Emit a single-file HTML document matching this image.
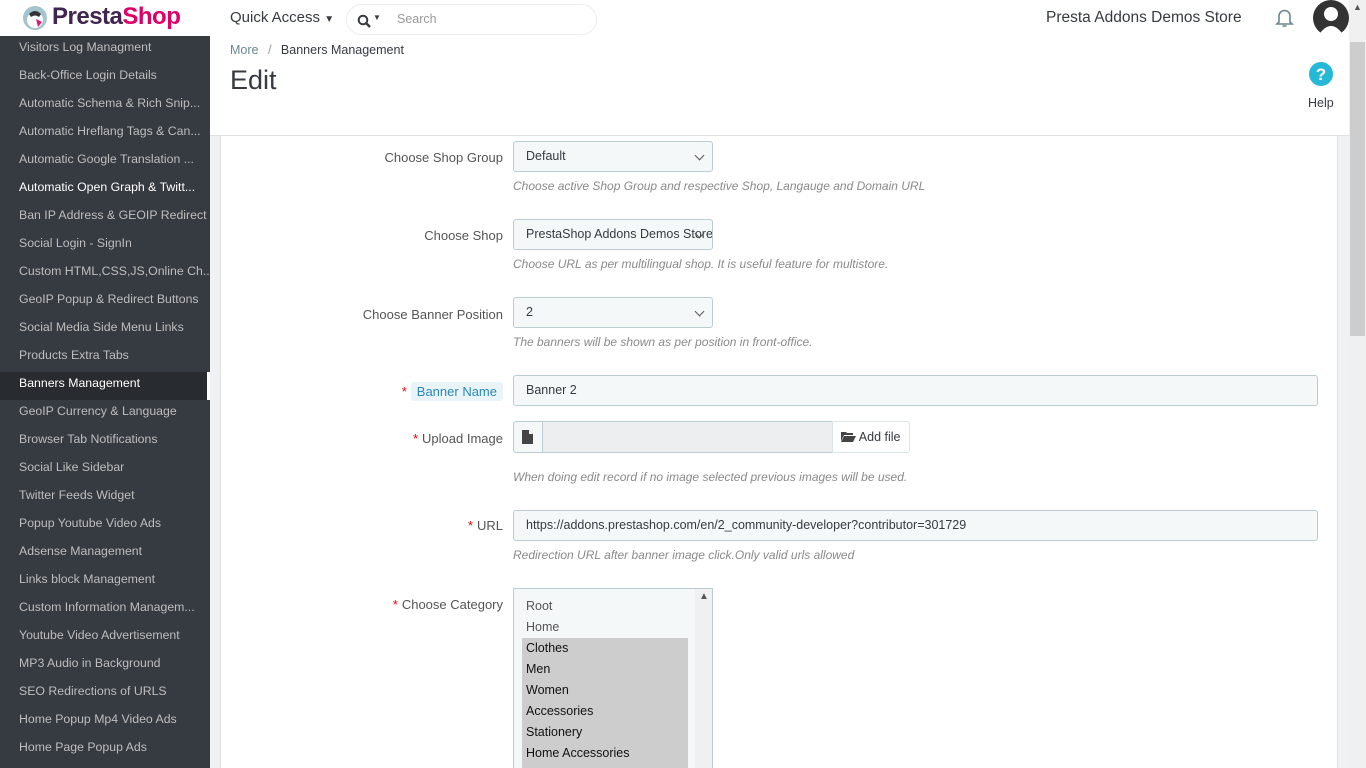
<!DOCTYPE html>
<html><head><meta charset="utf-8"><style>
*{box-sizing:border-box;margin:0;padding:0}
html,body{width:1366px;height:768px;overflow:hidden}
body{font-family:"Liberation Sans",sans-serif;background:#eff1f2;position:relative;color:#363a41}
.top{position:absolute;left:0;top:0;width:1349px;height:36px;background:#fff}
.side{position:absolute;left:0;top:36px;width:210px;height:732px;background:#363a41}
.side div{height:28px;line-height:22px;padding-left:19px;font-size:12.3px;color:#bebebe;white-space:nowrap;overflow:hidden}
.side .w{color:#fff}
.side .act{background:#282b30;color:#fff;border-right:3px solid #fff;line-height:22px}
.head{position:absolute;left:210px;top:36px;width:1139px;height:100px;background:#fff;border-bottom:1px solid #dfe2e4}
.panel{position:absolute;left:220px;top:136px;width:1118px;height:640px;background:#fff;border:1px solid #dfe2e4;border-top:none}
.lbl{position:absolute;right:863px;font-size:13px;color:#555;text-align:right;white-space:nowrap}
.star{color:#e00;margin-right:4px}
.inp{position:absolute;left:513px;height:31px;background:#f5f8f9;border:1px solid #bbcdd2;border-radius:3px;font-size:12.5px;line-height:29px;padding-left:12px;color:#363a41;white-space:nowrap;overflow:hidden}
.sel:after{content:"";position:absolute;right:9px;top:10px;width:6px;height:6px;border-right:1.5px solid #555;border-bottom:1.5px solid #555;transform:rotate(45deg)}
.help{position:absolute;left:513px;font-size:12px;font-style:italic;color:#8a8a8a;white-space:nowrap}
.scroll{position:absolute;left:1349px;top:0;width:17px;height:768px;background:#f0f0f0}
</style></head><body>
<div class="top">
 <svg style="position:absolute;left:22px;top:5px" width="26" height="26" viewBox="0 0 26 26"><circle cx="13" cy="13" r="12" fill="#a4c4cf"/><circle cx="13" cy="15" r="8" fill="#fff"/><path d="M7 9 Q13 3 19 9 L17 12 Q13 9 9 12Z" fill="#333"/><path d="M14 14 L20 17 L16 22Z" fill="#e0176c"/></svg>
 <div style="position:absolute;left:52px;top:3px;font-size:24px;font-weight:bold;letter-spacing:-0.5px"><span style="color:#40254f">Presta</span><span style="color:#df0067">Shop</span></div>
 <div style="position:absolute;left:230px;top:9px;font-size:15px;color:#363a41">Quick Access <span style="font-size:10px">▼</span></div>
 <div style="position:absolute;left:346px;top:4px;width:251px;height:31px;border:1px solid #eee;border-radius:16px">
  <svg style="position:absolute;left:10px;top:9px" width="14" height="14" viewBox="0 0 14 14"><circle cx="6" cy="6" r="4.3" fill="none" stroke="#363a41" stroke-width="2"/><path d="M9 9l4 4" stroke="#363a41" stroke-width="2.4"/></svg>
  <span style="position:absolute;left:26px;top:8px;font-size:8px">▼</span>
  <span style="position:absolute;left:50px;top:7px;font-size:12.5px;color:#999">Search</span>
 </div>
 <div style="position:absolute;left:1046px;top:9px;font-size:15.5px;color:#363a41">Presta Addons Demos Store</div>
 <svg style="position:absolute;left:1275px;top:8px" width="19" height="20" viewBox="0 0 19 20"><path d="M4 14V8a5.5 5.5 0 0 1 11 0v6l2 2H2z" fill="none" stroke="#6c868e" stroke-width="1.6"/><path d="M7.5 18h4" stroke="#6c868e" stroke-width="1.6"/></svg>
 <svg style="position:absolute;left:1313px;top:0px" width="36" height="36" viewBox="0 0 36 36"><circle cx="18" cy="18" r="18" fill="#333"/><circle cx="18" cy="14" r="7" fill="#fff"/><path d="M5 36 Q18 16 31 36Z" fill="#fff"/></svg>
</div>
<div class="side">
<div>Visitors Log Managment</div><div>Back-Office Login Details</div><div>Automatic Schema &amp; Rich Snip...</div><div>Automatic Hreflang Tags &amp; Can...</div><div>Automatic Google Translation ...</div><div class="w">Automatic Open Graph &amp; Twitt...</div><div>Ban IP Address &amp; GEOIP Redirect</div><div>Social Login - SignIn</div><div>Custom HTML,CSS,JS,Online Ch...</div><div>GeoIP Popup &amp; Redirect Buttons</div><div>Social Media Side Menu Links</div><div>Products Extra Tabs</div><div class="act">Banners Management</div><div>GeoIP Currency &amp; Language</div><div>Browser Tab Notifications</div><div>Social Like Sidebar</div><div>Twitter Feeds Widget</div><div>Popup Youtube Video Ads</div><div>Adsense Management</div><div>Links block Management</div><div>Custom Information Managem...</div><div>Youtube Video Advertisement</div><div>MP3 Audio in Background</div><div>SEO Redirections of URLS</div><div>Home Popup Mp4 Video Ads</div><div>Home Page Popup Ads</div>
</div>
<div class="head">
 <div style="position:absolute;left:20px;top:7px;font-size:12.5px"><span style="color:#6c868e">More</span> <span style="color:#999;margin:0 6px">/</span> Banners Management</div>
 <div style="position:absolute;left:20px;top:29px;font-size:27px;color:#363a41">Edit</div>
 <svg style="position:absolute;left:1098px;top:25px" width="26" height="26" viewBox="0 0 26 26"><circle cx="13" cy="13" r="12" fill="#25b9d7"/><text x="13" y="19" text-anchor="middle" font-family="Liberation Sans" font-weight="bold" font-size="17" fill="#fff">?</text></svg>
 <div style="position:absolute;left:1098px;top:60px;font-size:12.5px">Help</div>
</div>
<div class="panel"></div>
<div class="lbl" style="top:150px">Choose Shop Group</div>
<div class="inp sel" style="top:141px;width:200px">Default</div>
<div class="help" style="top:179px">Choose active Shop Group and respective Shop, Langauge and Domain URL</div>
<div class="lbl" style="top:228px">Choose Shop</div>
<div class="inp sel" style="top:219px;width:200px;padding-right:24px">PrestaShop Addons Demos Store</div>
<div class="help" style="top:257px">Choose URL as per multilingual shop. It is useful feature for multistore.</div>
<div class="lbl" style="top:307px">Choose Banner Position</div>
<div class="inp sel" style="top:297px;width:200px">2</div>
<div class="help" style="top:335px">The banners will be shown as per position in front-office.</div>
<div class="lbl" style="top:384px"><span class="star">*</span><span style="background:#e9f4f8;color:#2a88b9;padding:2px 6px;border-radius:3px">Banner Name</span></div>
<div class="inp" style="top:375px;width:805px">Banner 2</div>
<div class="lbl" style="top:431px"><span class="star">*</span>Upload Image</div>
<div style="position:absolute;left:513px;top:421px;width:30px;height:32px;background:#f5f8f9;border:1px solid #bbcdd2;border-radius:3px 0 0 3px"><svg style="position:absolute;left:8px;top:8px" width="12" height="14" viewBox="0 0 12 14"><path d="M0 0h7l4 4v10H0z" fill="#444"/><path d="M7 0v4h4" fill="#fff"/></svg></div>
<div style="position:absolute;left:543px;top:421px;width:290px;height:32px;background:#eceeef;border:1px solid #bbcdd2;border-left:none"></div>
<div style="position:absolute;left:832px;top:421px;width:78px;height:32px;background:#fff;border:1px solid #dbe6e9;border-radius:0 3px 3px 0;font-size:12.5px;line-height:30px;padding-left:8px">
<svg width="15" height="11" viewBox="0 0 15 11" style="vertical-align:-1px"><path d="M0 1h5l1 1h6v2H3L0 10z M3 5h12l-3 6H0z" fill="#444"/></svg> Add file</div>
<div class="help" style="top:470px">When doing edit record if no image selected previous images will be used.</div>
<div class="lbl" style="top:518px"><span class="star">*</span>URL</div>
<div class="inp" style="top:510px;width:805px">https://addons.prestashop.com/en/2_community-developer?contributor=301729</div>
<div class="help" style="top:548px">Redirection URL after banner image click.Only valid urls allowed</div>
<div class="lbl" style="top:597px"><span class="star">*</span>Choose Category</div>
<div style="position:absolute;left:513px;top:588px;width:200px;height:190px;background:#f5f8f9;border:1px solid #bbcdd2;font-size:12.5px;overflow:hidden">
 <div style="position:absolute;right:0;top:0;width:17px;height:190px;background:#f0f0f0"><span style="position:absolute;left:4px;top:2px;font-size:10px;color:#555">▲</span></div>
 <div style="position:absolute;left:8px;top:7px;width:166px;line-height:21px">
  <div style="padding-left:4px;color:#555">Root</div><div style="padding-left:4px;color:#555">Home</div>
  <div style="background:#cdcdcd;color:#111;padding-left:4px">Clothes<br>Men<br>Women<br>Accessories<br>Stationery<br>Home Accessories<br>&nbsp;</div>
 </div>
</div>
<div class="scroll"><span style="position:absolute;left:4px;top:2px;font-size:9px;color:#555">▲</span><div style="position:absolute;left:1px;top:42px;width:15px;height:294px;background:#cdcdcd"></div></div>
</body></html>
